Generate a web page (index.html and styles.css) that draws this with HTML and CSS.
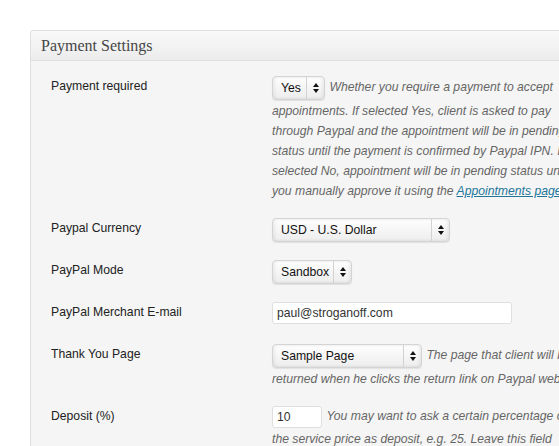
FILE: index.html
```html
<!DOCTYPE html>
<html>
<head>
<meta charset="utf-8">
<title>Payment Settings</title>
<link rel="stylesheet" href="styles.css">
</head>
<body>
<div class="page">
  <div class="postbox">
    <h3 class="hndle">Payment Settings</h3>
    <div class="inside">
      <div class="row">
        <div class="label">Payment required</div>
        <div class="field">
          <span class="select w-yes"><span class="val">Yes</span><span class="arr"><svg width="6" height="10" viewBox="0 0 6 10"><path d="M3 0L6 4H0z M0 6H6L3 10z" fill="#111"/></svg></span></span>
          <span class="description">Whether you require a payment to accept<br>appointments. If selected Yes, client is asked to pay<br>through Paypal and the appointment will be in pending<br>status until the payment is confirmed by Paypal IPN. If<br>selected No, appointment will be in pending status until<br>you manually approve it using the <a href="#">Appointments page</a>.</span>
        </div>
      </div>
      <div class="row">
        <div class="label">Paypal Currency</div>
        <div class="field">
          <span class="select w-usd"><span class="val">USD - U.S. Dollar</span><span class="arr"><svg width="6" height="10" viewBox="0 0 6 10"><path d="M3 0L6 4H0z M0 6H6L3 10z" fill="#111"/></svg></span></span>
        </div>
      </div>
      <div class="row">
        <div class="label">PayPal Mode</div>
        <div class="field">
          <span class="select w-sandbox"><span class="val">Sandbox</span><span class="arr"><svg width="6" height="10" viewBox="0 0 6 10"><path d="M3 0L6 4H0z M0 6H6L3 10z" fill="#111"/></svg></span></span>
        </div>
      </div>
      <div class="row">
        <div class="label">PayPal Merchant E-mail</div>
        <div class="field">
          <input class="text w-email" type="text" value="paul@stroganoff.com">
        </div>
      </div>
      <div class="row">
        <div class="label">Thank You Page</div>
        <div class="field">
          <span class="select w-page"><span class="val">Sample Page</span><span class="arr"><svg width="6" height="10" viewBox="0 0 6 10"><path d="M3 0L6 4H0z M0 6H6L3 10z" fill="#111"/></svg></span></span>
          <span class="description">The page that client will be<br>returned when he clicks the return link on Paypal website.</span>
        </div>
      </div>
      <div class="row">
        <div class="label">Deposit (%)</div>
        <div class="field">
          <input class="text w-deposit" type="text" value="10">
          <span class="description">You may want to ask a certain percentage of<br>the service price as deposit, e.g. 25. Leave this field<br>empty to ask for full price.</span>
        </div>
      </div>
    </div>
  </div>
</div>
</body>
</html>
```

FILE: styles.css
```css
html, body {
  margin: 0;
  background: #fff;
  overflow: hidden;
}

body {
  font-family: "Liberation Sans", Arial, sans-serif;
  font-size: 12.2px;
  color: #222;
}

.page {
  padding: 30px 0 0 30px;
}

.postbox {
  width: 640px;
  border: 1px solid #dfdfdf;
  border-radius: 3px;
  background: #f5f5f5;
}

.hndle {
  margin: 0;
  height: 29px;
  line-height: 29px;
  padding: 0 10px;
  font-family: "Liberation Serif", "Times New Roman", serif;
  font-weight: normal;
  font-size: 16px;
  color: #464646;
  background: linear-gradient(#f9f9f9, #ececec);
  border-bottom: 1px solid #dfdfdf;
  border-radius: 3px 3px 0 0;
}

.inside {
  padding: 6px 0 0 20px;
}

.row {
  display: grid;
  grid-template-columns: 221px 1fr;
  padding: 8px 0;
  min-height: 42px;
  box-sizing: border-box;
}

.label {
  line-height: 20px;
  padding-top: 1px;
  color: #222;
}

.field {
  line-height: 20px;
  white-space: nowrap;
}

.select {
  display: inline-flex;
  vertical-align: middle;
  height: 24px;
  margin: 1px 0;
  box-sizing: border-box;
  border: 1px solid #d4d4d4;
  border-radius: 4px;
  background: linear-gradient(#fefefe, #ededed);
  box-shadow: 0 1px 1px rgba(0, 0, 0, 0.08), inset 2px 0 3px rgba(0, 0, 0, 0.06), inset -2px 0 3px rgba(0, 0, 0, 0.06);
  color: #111;
  line-height: 22px;
}

.select .val {
  flex: 1;
  padding-left: 8px;
}

.select .arr {
  width: 17px;
  border-left: 1px solid #d2d2d2;
  display: flex;
  align-items: center;
  justify-content: center;
}

.w-yes { width: 53px; }
.w-usd { width: 178px; }
.w-sandbox { width: 80px; }
.w-page { width: 150px; }

.text {
  display: inline-block;
  vertical-align: middle;
  box-sizing: border-box;
  height: 22px;
  margin: 1px 0;
  padding: 0 4px;
  border: 1px solid #dfdfdf;
  border-radius: 3px;
  background: #fff;
  font-family: "Liberation Sans", Arial, sans-serif;
  font-size: 12.2px;
  color: #333;
}

.w-email { width: 240px; }
.w-deposit { width: 50px; }

.description {
  font-style: italic;
  color: #666;
  margin-left: 1px;
}

.description a {
  color: #21759b;
  text-decoration: underline;
}
```
